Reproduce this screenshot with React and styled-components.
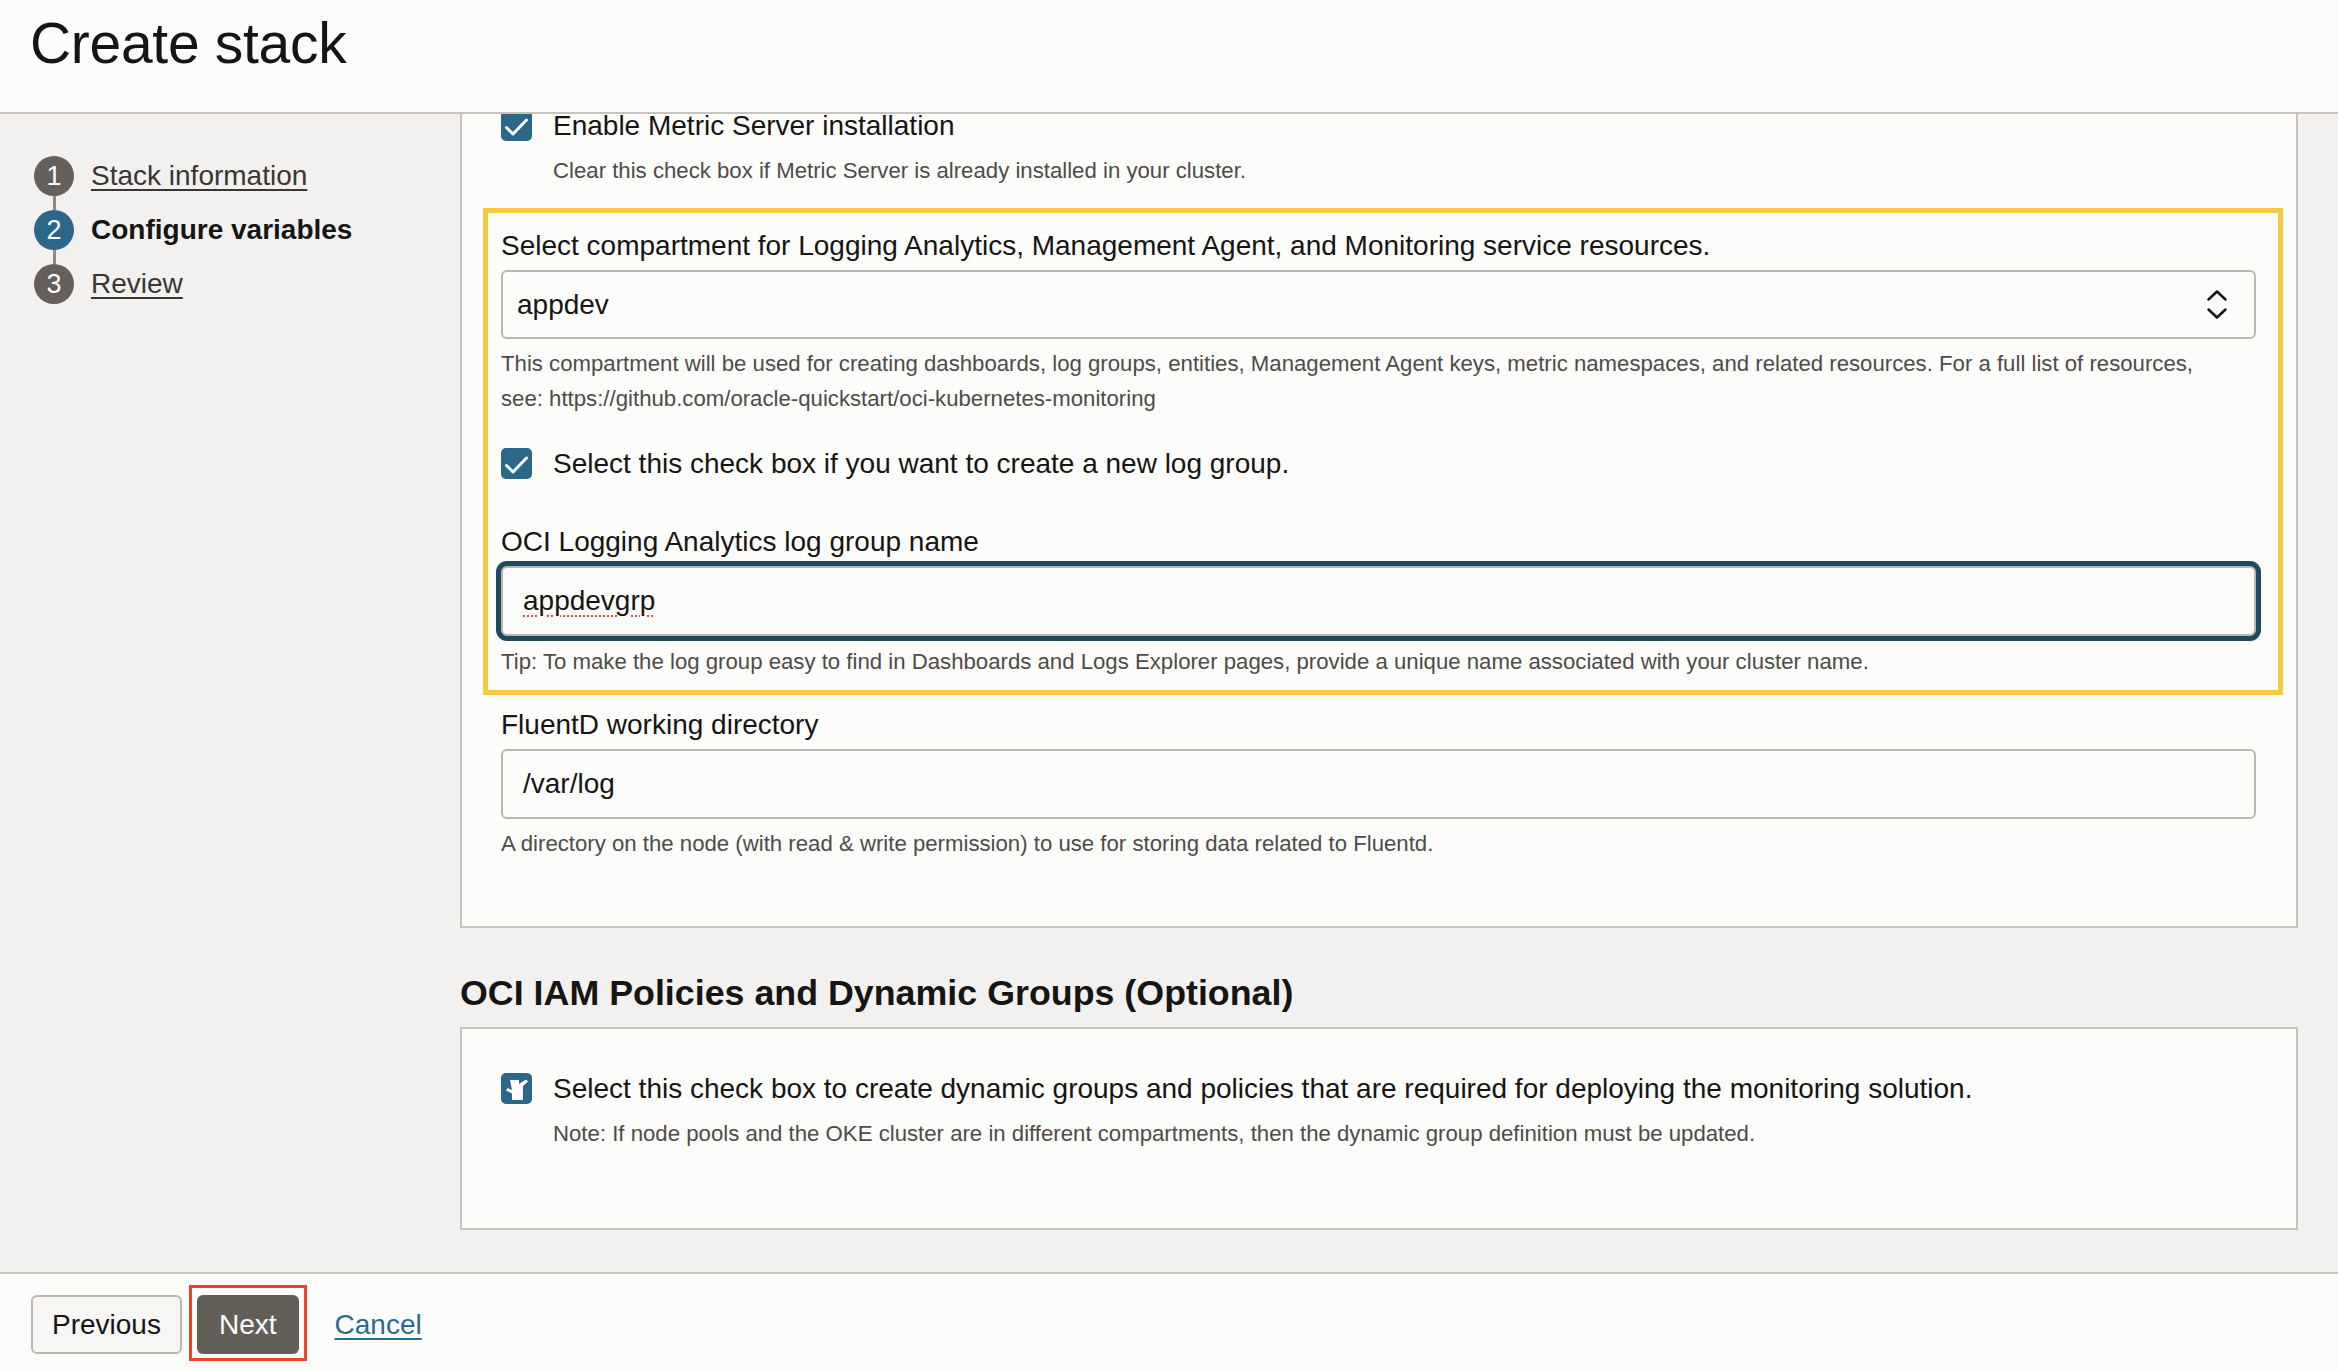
import styled, { createGlobalStyle } from "styled-components";

const GlobalStyle = createGlobalStyle`
    html, body {
        margin: 0;
        padding: 0;
        background: #f2f1ef;
    }
    body {
        font-family: "Liberation Sans", Helvetica, Arial, sans-serif;
        color: #161513;
    }
    * {
        box-sizing: border-box;
    }
`

const Page = styled.div`
    display: flex;
    flex-direction: column;
    height: 1370px;
    overflow: hidden;
    background: #f2f1ef;
`
const Header = styled.header`
    flex: none;
    height: 114px;
    padding: 15px 30px 0;
    background: #fcfcfb;
    border-bottom: 2px solid #c8c3be;
    position: relative;
    z-index: 1;
`
const Title = styled.h1`
    margin: 0;
    font-size: 57px;
    line-height: 56px;
    font-weight: 400;
    letter-spacing: -0.3px;
`
const Body = styled.div`
    flex: 1;
    min-height: 0;
    display: grid;
    grid-template-columns: 460px 1fr;
    overflow: hidden;
`
const Sidebar = styled.nav`
    padding: 42px 0 0 34px;
`
const StepList = styled.div`
    display: flex;
    flex-direction: column;
`
const Step = styled.div`
    display: flex;
    align-items: center;
    height: 40px;
`
const StepNumber = styled.span`
    display: flex;
    align-items: center;
    justify-content: center;
    flex: none;
    width: 40px;
    height: 40px;
    border-radius: 50%;
    background: ${p => (p.$active ? "#2b6788" : "#665f5a")};
    color: #ffffff;
    font-size: 27px;
`
const StepConnector = styled.span`
    display: block;
    width: 3px;
    height: 14px;
    margin-left: 18.5px;
    background: #8f8883;
`
const StepLabel = styled.span`
    margin-left: 17px;
    font-size: 28px;
    color: ${p => (p.$active ? "#161513" : "#3a3633")};
    font-weight: ${p => (p.$active ? 700 : 400)};
    text-decoration: ${p => (p.$active ? "none" : "underline")};
    text-underline-offset: 4px;
    text-decoration-thickness: 2px;
`
const Main = styled.main`
    padding-right: 40px;
    overflow: hidden;
`
const Card = styled.section`
    margin-top: ${p => p.$mt || "0"};
    padding: ${p => p.$pad};
    background: #fcfcfb;
    border: 2px solid #c8c3be;
`
const CheckRow = styled.div`
    display: flex;
    align-items: center;
    gap: 21px;
    margin-top: ${p => p.$mt || "0"};
    font-size: 28px;
    line-height: 31px;
`
const Box = styled.span`
    display: flex;
    align-items: center;
    justify-content: center;
    flex: none;
    width: 31px;
    height: 31px;
    border-radius: 5px;
    background: #2b6788;
`
const Hint = styled.div`
    margin-top: ${p => p.$mt || "7px"};
    margin-left: ${p => (p.$indent ? "52px" : "0")};
    font-size: 22.2px;
    line-height: 35px;
    color: #4f4b48;
`
const Highlight = styled.div`
    margin: 20px -27px 0 -18px;
    padding: 15px 22px 11px 13px;
    border: 5px solid #f7c843;
`
const FieldLabel = styled.div`
    margin-top: ${p => p.$mt || "0"};
    font-size: 28px;
    line-height: 36px;
`
const Select = styled.div`
    display: flex;
    align-items: center;
    justify-content: space-between;
    margin-top: 6px;
    height: 69px;
    padding: 0 27px 0 14px;
    border: 2px solid #bdb7b2;
    border-radius: 6px;
    background: #fcfcfb;
    font-size: 28px;
`
const Input = styled.div`
    display: flex;
    align-items: center;
    margin-top: 6px;
    height: 70px;
    padding-left: 20px;
    border: 2px solid #bdb7b2;
    border-radius: 6px;
    background: #fcfcfb;
    font-size: 28px;
    box-shadow: ${p => (p.$focused ? "0 0 0 5px #1f4b5f" : "none")};
`
const Misspelled = styled.span`
    text-decoration: underline dotted #e0533f;
    text-decoration-thickness: 2px;
    text-underline-offset: 5px;
`
const SectionTitle = styled.h2`
    margin: 43px 0 12px;
    font-size: 35.8px;
    line-height: 44px;
    font-weight: 700;
`
const Footer = styled.footer`
    flex: none;
    display: flex;
    align-items: flex-start;
    height: 98px;
    padding: 0 31px;
    background: #fcfcfb;
    border-top: 2px solid #c8c3be;
`
const Button = styled.button`
    height: 59px;
    padding: ${p => (p.$primary ? "0 22px" : "0 19px")};
    margin-top: ${p => (p.$primary ? "0" : "21px")};
    margin-right: ${p => (p.$primary ? "0" : "7px")};
    border: ${p => (p.$primary ? "none" : "2px solid #bdb7b2")};
    border-radius: 6px;
    background: ${p => (p.$primary ? "#645e59" : "#f7f6f5")};
    color: ${p => (p.$primary ? "#ffffff" : "#161513")};
    font-family: inherit;
    font-size: 28px;
`
const Marker = styled.span`
    display: flex;
    margin-top: 11px;
    padding: 7px 5px 4px;
    border: 3px solid #e8442c;
`
const CancelLink = styled.a`
    margin: 21px 0 0 28px;
    font-size: 28px;
    line-height: 59px;
    color: #2c6b8f;
    text-decoration: underline;
    text-underline-offset: 4px;
    text-decoration-thickness: 2px;
`

const CheckMark = () => (
    <svg width="31" height="31" viewBox="0 0 31 31">
        <polyline points="5.5,17.5 12,24 25.5,10" fill="none" stroke="#fff" strokeWidth="3" strokeLinecap="round" strokeLinejoin="round" />
    </svg>
);

const CursorMark = () => (
    <svg width="31" height="31" viewBox="0 0 31 31">
        <path d="M9 7 L18 7 L18 11 L25 6.5 L27 8.5 L22 13 L22 27 L11 27 L11 20.5 L5 17.5 L6.5 15 L11 17 Z" fill="#fff" />
    </svg>
);

const Chevrons = () => (
    <svg width="20" height="29" viewBox="0 0 20 29">
        <polyline points="1.5,9.5 10,1.5 18.5,9.5" fill="none" stroke="#161513" strokeWidth="2.5" strokeLinecap="round" strokeLinejoin="round" />
        <polyline points="1.5,19.5 10,27.5 18.5,19.5" fill="none" stroke="#161513" strokeWidth="2.5" strokeLinecap="round" strokeLinejoin="round" />
    </svg>
);

const steps = [
    { n: 1, label: "Stack information" },
    { n: 2, label: "Configure variables", active: true },
    { n: 3, label: "Review" },
];

const App = () => {
    return (
        <Page>
            <GlobalStyle />
            <Header>
                <Title>Create stack</Title>
            </Header>

            <Body>
                <Sidebar>
                    <StepList>
                        {steps.map((s, i) => (
                            <div key={s.n}>
                                {i > 0 && <StepConnector />}
                                <Step>
                                    <StepNumber $active={s.active}>{s.n}</StepNumber>
                                    <StepLabel $active={s.active}>{s.label}</StepLabel>
                                </Step>
                            </div>
                        ))}
                    </StepList>
                </Sidebar>

                <Main>
                    <Card $mt="-36px" $pad="30px 40px 65px 39px">
                        <CheckRow>
                            <Box><CheckMark /></Box>
                            Enable Metric Server installation
                        </CheckRow>
                        <Hint $indent $mt="12px">Clear this check box if Metric Server is already installed in your cluster.</Hint>

                        <Highlight>
                            <FieldLabel>Select compartment for Logging Analytics, Management Agent, and Monitoring service resources.</FieldLabel>
                            <Select>
                                <span>appdev</span>
                                <Chevrons />
                            </Select>
                            <Hint>
                                This compartment will be used for creating dashboards, log groups, entities, Management Agent keys, metric namespaces, and related resources. For a full list of resources,<br />
                                see: https://github.com/oracle-quickstart/oci-kubernetes-monitoring
                            </Hint>

                            <CheckRow $mt="32px">
                                <Box><CheckMark /></Box>
                                Select this check box if you want to create a new log group.
                            </CheckRow>

                            <FieldLabel $mt="45px">OCI Logging Analytics log group name</FieldLabel>
                            <Input $focused>
                                <Misspelled>appdevgrp</Misspelled>
                            </Input>
                            <Hint $mt="8px">Tip: To make the log group easy to find in Dashboards and Logs Explorer pages, provide a unique name associated with your cluster name.</Hint>
                        </Highlight>

                        <FieldLabel $mt="12px">FluentD working directory</FieldLabel>
                        <Input>/var/log</Input>
                        <Hint>A directory on the node (with read &amp; write permission) to use for storing data related to Fluentd.</Hint>
                    </Card>

                    <SectionTitle>OCI IAM Policies and Dynamic Groups (Optional)</SectionTitle>

                    <Card $pad="44px 40px 77px 39px">
                        <CheckRow>
                            <Box><CursorMark /></Box>
                            Select this check box to create dynamic groups and policies that are required for deploying the monitoring solution.
                        </CheckRow>
                        <Hint $indent $mt="12px">Note: If node pools and the OKE cluster are in different compartments, then the dynamic group definition must be updated.</Hint>
                    </Card>
                </Main>
            </Body>

            <Footer>
                <Button>Previous</Button>
                <Marker>
                    <Button $primary>Next</Button>
                </Marker>
                <CancelLink href="#">Cancel</CancelLink>
            </Footer>
        </Page>
    );
};

export default App;
